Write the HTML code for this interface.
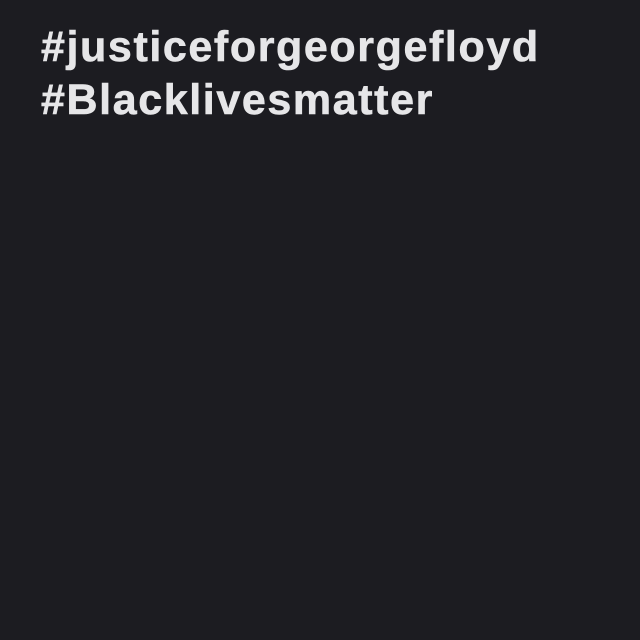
<!DOCTYPE html>
<html><head><meta charset="utf-8"><style>
html,body{margin:0;padding:0;}
body{width:640px;height:640px;background:#1c1c21;overflow:hidden;position:relative;}
.t{position:absolute;left:41px;font-family:"Liberation Sans",sans-serif;font-weight:bold;font-size:43px;color:#e6e6e8;letter-spacing:1.6px;white-space:nowrap;line-height:1;-webkit-text-stroke:0.6px #e6e6e8;}
</style></head><body>
<div class="t" style="top:26px">#justiceforgeorgefloyd</div>
<div class="t" style="top:79px">#Blacklivesmatter</div>
</body></html>
